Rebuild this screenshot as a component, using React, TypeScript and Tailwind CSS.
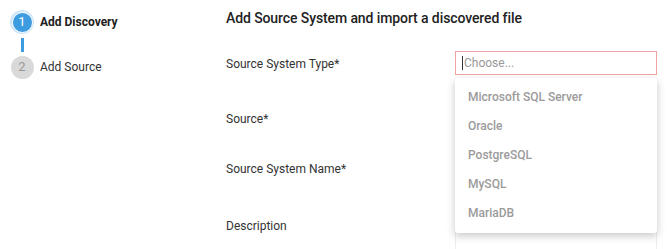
import React from "react";

const steps = [
  { n: 1, label: "Add Discovery", active: true },
  { n: 2, label: "Add Source", active: false },
];

const options = ["Microsoft SQL Server", "Oracle", "PostgreSQL", "MySQL", "MariaDB"];

function Stepper() {
  return (
    <div className="flex flex-col pl-[10px] pt-[10px]">
      {steps.map((s, i) => (
        <div key={s.n} className="flex flex-col">
          <div className="flex items-center gap-[6px]">
            {s.active ? (
              <div className="w-[24px] h-[24px] rounded-full bg-[#cfe6f7] flex items-center justify-center">
                <div className="w-[21px] h-[21px] rounded-full bg-[#3d9be0] border border-white flex items-center justify-center text-white text-[13px]">
                  {s.n}
                </div>
              </div>
            ) : (
              <div className="w-[24px] h-[24px] flex items-center justify-center">
                <div className="w-[23px] h-[23px] rounded-full bg-[#d9d9d9] flex items-center justify-center text-[#9a9a9a] text-[13px]">
                  {s.n}
                </div>
              </div>
            )}
            <span
              className={
                s.active
                  ? "text-[12px] font-bold text-[#222]"
                  : "text-[12px] text-[#333]"
              }
            >
              {s.label}
            </span>
          </div>
          {i < steps.length - 1 ? (
            <div className="w-[24px] flex justify-center pt-[4px] pb-[3px]">
              <div className="w-[3px] h-[14px] bg-[#3d9be0]" />
            </div>
          ) : null}
        </div>
      ))}
    </div>
  );
}

function Row({ label, children, h }: { label: string; children?: React.ReactNode; h: string }) {
  return (
    <div className={`flex ${h}`}>
      <div className="w-[229px] text-[12px] text-[#333] pt-[4px]">{label}</div>
      <div className="w-[202px]">{children}</div>
    </div>
  );
}

export default function App() {
  return (
    <div
      className="w-[670px] h-[249px] bg-white flex overflow-hidden"
      style={{ fontFamily: "Roboto, 'Liberation Sans', sans-serif" }}
    >
      <div className="w-[226px] shrink-0">
        <Stepper />
      </div>
      <div className="flex flex-col pt-[8px]">
        <h1 className="text-[14px] font-medium text-[#222] leading-[20px] tracking-[-0.1px]">
          Add Source System and import a discovered file
        </h1>
        <div className="flex flex-col mt-[23px]">
          <div className="flex h-[55px]">
            <div className="w-[229px] text-[12px] text-[#333] pt-[4px]">Source System Type*</div>
            <div className="w-[202px] relative">
              <div className="h-[24px] border border-[#f0a5a5] flex items-center pl-[6px] text-[12px] text-[#999]">
                <span className="w-px h-[14px] bg-[#333] mr-px" />
                Choose...
              </div>
              <div className="absolute left-0 top-[27px] w-[202px] bg-white rounded-[3px] shadow-[0_3px_8px_rgba(0,0,0,0.22)] z-10 pt-[4px] pb-[6px]">
                {options.map((o) => (
                  <div key={o} className="h-[29px] flex items-center pl-[13px] text-[12px] font-medium text-[#9b9b9b]">
                    {o}
                  </div>
                ))}
              </div>
            </div>
          </div>
          <Row label="Source*" h="h-[50px]">
            <div className="h-[24px] border border-[#e6e6e6]" />
          </Row>
          <Row label="Source System Name*" h="h-[57px]">
            <div className="h-[24px] border border-[#e6e6e6]" />
          </Row>
          <Row label="Description" h="h-[60px]">
            <div className="h-[60px] border border-[#eeeeee] -mt-[20px]" />
          </Row>
        </div>
      </div>
    </div>
  );
}
